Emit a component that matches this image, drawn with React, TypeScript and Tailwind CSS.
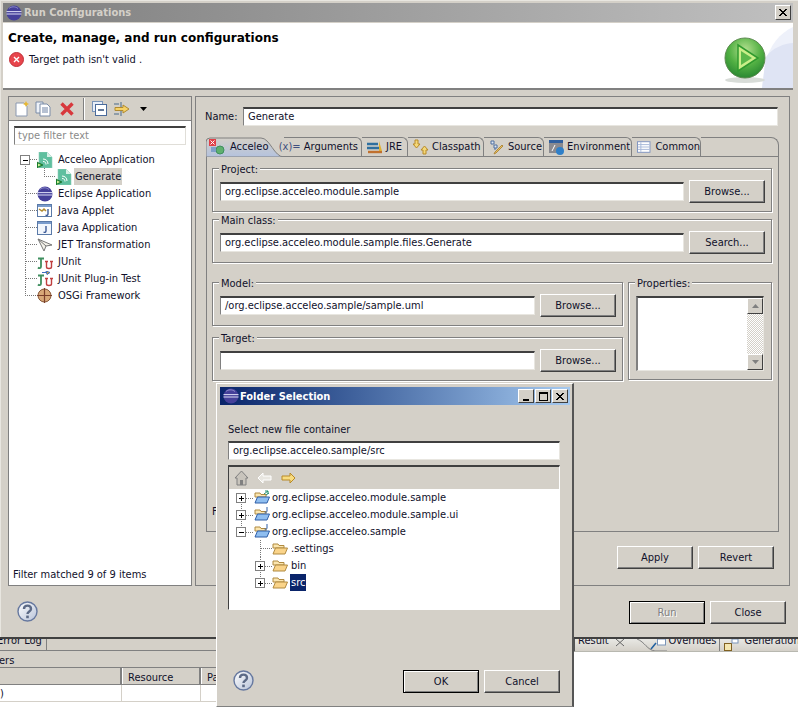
import type { ReactNode } from 'react'

const ui = 'font-["DejaVu_Sans_Condensed","Liberation_Sans",Arial,sans-serif] text-[11px] leading-[14px] text-[#10102a]'

function Btn({ label, def, disabled }: { label: string; def?: boolean; disabled?: boolean }) {
  return (
    <div
      className={`flex h-[23px] w-[76px] shrink-0 items-center justify-center bg-[#d4d0c8] ${
        def
          ? 'border border-black shadow-[inset_1px_1px_0_#fff,inset_-1px_-1px_0_#808080]'
          : 'border-t border-l border-t-white border-l-white border-r border-b border-r-[#404040] border-b-[#404040] shadow-[inset_-1px_-1px_0_#808080]'
      } ${disabled ? 'text-[#808080] [text-shadow:1px_1px_0_#fff]' : ''}`}
    >
      {label}
    </div>
  )
}

function Field({ value, className = '' }: { value?: string; className?: string }) {
  return (
    <div
      className={`flex h-[19px] items-center overflow-hidden whitespace-nowrap bg-white pl-[4px] border-t-2 border-l border-t-[#404040] border-l-[#808080] border-r border-b border-r-[#e8e6e0] border-b-[#e8e6e0] ${className}`}
    >
      {value}
    </div>
  )
}

function Group({ label, className = '', children }: { label: string; className?: string; children?: ReactNode }) {
  return (
    <div className={`relative border border-[#808080] shadow-[1px_1px_0_#fff,inset_1px_1px_0_#fff] ${className}`}>
      <span className="absolute -top-[6px] left-[6px] bg-[#d4d0c8] px-[2px]">{label}</span>
      {children}
    </div>
  )
}

function FieldGroup({ label, value, action, className }: { label: string; value?: string; action: string; className: string }) {
  return (
    <Group label={label} className={`flex h-[44px] items-center gap-[5px] pl-[7px] pr-[6px] pt-[3px] ${className}`}>
      <Field value={value} className="flex-1" />
      <Btn label={action} />
    </Group>
  )
}

function Help() {
  return (
    <svg width="21" height="21" viewBox="0 0 21 21">
      <defs>
        <linearGradient id="hg" x1="0" y1="0" x2="1" y2="1">
          <stop offset="0" stopColor="#fff" />
          <stop offset="1" stopColor="#b7c2d8" />
        </linearGradient>
      </defs>
      <circle cx="10.5" cy="10.5" r="9.5" fill="url(#hg)" stroke="#66789f" strokeWidth="1.4" />
      <path d="M7 8c0-4.5 7-4.5 7 0 0 2.5-3.5 2.5-3.5 5" fill="none" stroke="#5c6a86" strokeWidth="2.4" />
      <rect x="9.2" y="14.6" width="2.6" height="2.6" fill="#5c6a86" />
    </svg>
  )
}

function EclipseBall({ size = 16 }: { size?: number }) {
  return (
    <svg width={size} height={size} viewBox="0 0 16 16" className="shrink-0">
      <circle cx="8" cy="8" r="7.500" fill="#45409a" />
      <path d="M.5 6.600h15M.5 9h15" stroke="#dcdcf4" strokeWidth="1" />
      <path d="M3 3.500c2-2 6-2.400 9 0" fill="none" stroke="#8f8ccc" />
    </svg>
  )
}

function AcceleoIcon() {
  return (
    <svg width="16" height="16" viewBox="0 0 16 16" className="shrink-0">
      <path d="M2 0h8l5 5v11H2z" fill="#5fbf9f" stroke="#8fcfba" strokeWidth=".6" />
      <path d="M10 0v5h5z" fill="#d8efe6" />
      <path d="M6 7c3 0 5 2 5 5M6 9.500c2 0 3 1 3 3" fill="none" stroke="#fff" />
      <path d="M0 10l6 3-6 3z" fill="#1f8f2f" stroke="#0f5f1f" strokeWidth=".6" />
      <path d="M1 11.500l3 1.500-3 1.500z" fill="#d4f0a0" />
    </svg>
  )
}

function AppletIcon() {
  return (
    <svg width="15" height="14" viewBox="0 0 15 14" className="shrink-0">
      <rect x=".5" y=".5" width="14" height="12" fill="#fff" stroke="#5a7aa8" />
      <rect x="1" y="1" width="13" height="2" fill="#7a9ccc" />
      <path d="M2 5l3 2 2-2 2 2" fill="none" stroke="#b08a30" strokeWidth="1.500" />
      <path d="M11 5v5c0 1.500-1.500 1.500-2.500 1" fill="none" stroke="#2f4f8f" strokeWidth="1.300" />
    </svg>
  )
}

function JavaAppIcon() {
  return (
    <svg width="15" height="14" viewBox="0 0 15 14" className="shrink-0">
      <rect x=".5" y=".5" width="14" height="13" fill="#f2f6fc" stroke="#5a7aa8" />
      <rect x="1" y="1" width="13" height="2" fill="#7a9ccc" />
      <path d="M9 5v5c0 1.500-1.500 1.500-2.500 1" fill="none" stroke="#2f4f8f" strokeWidth="1.300" />
    </svg>
  )
}

function JetIcon() {
  return (
    <svg width="16" height="14" viewBox="0 0 16 14" className="shrink-0">
      <path d="M1 1l14 6-6 1-2 5z" fill="#f4f2ea" stroke="#777" />
      <path d="M1 1l8 7" stroke="#777" />
    </svg>
  )
}

function JUnitIcon({ plugin }: { plugin?: boolean }) {
  return (
    <svg width="16" height="16" viewBox="0 0 16 16" className="shrink-0">
      {plugin && <path d="M5 1.500h5M9 0l4 1.500-3 2z" fill="#d8a830" stroke="#3f6fbf" />}
      <path d="M1 4.500h6M4 4.500v8c0 2-2 2-3 1" fill="none" stroke="#3f8f5f" strokeWidth="1.800" />
      <path d="M8 7.500h3M13 7.500h3M9.500 7.500v5.500c0 2 5 2 5 0V7.500" fill="none" stroke="#c04040" strokeWidth="1.400" />
    </svg>
  )
}

function OsgiIcon() {
  return (
    <svg width="15" height="15" viewBox="0 0 15 15" className="shrink-0">
      <circle cx="7.500" cy="7.500" r="6.500" fill="#d8a878" stroke="#8a5a3a" />
      <path d="M7.500 0v15M0 7.500h15" stroke="#7a3f2a" strokeWidth="1.200" />
    </svg>
  )
}

function Folder({ project, mark }: { project?: boolean; mark?: 'j' | 'a' }) {
  return (
    <svg width="16" height="15" viewBox="0 0 16 15" className="shrink-0">
      <path d="M1 3h5l1 1.500h5V7H1z" fill="#fbe6b0" stroke="#b08a40" />
      <path d="M1 13L3.500 7H15.500L13 13z" fill={project ? '#8fbef0' : '#fad48a'} stroke={project ? '#2f5fa8' : '#b08a40'} />
      {mark === 'j' && <path d="M13 0v4c0 1.500-1.500 1.500-2.500 1" fill="none" stroke="#2f5fa8" />}
      {mark === 'a' && <path d="M10 4l4-3M11 1h3v3M12 5l3-2" fill="none" stroke="#1f8f6f" />}
    </svg>
  )
}

function Guide({ w, d, box, cx }: { w: number; d: string; box?: '+' | '-'; cx?: number }) {
  return (
    <svg width={w} height="17" className="shrink-0">
      <path d={d} fill="none" stroke="#777" strokeDasharray="1 1" shapeRendering="crispEdges" />
      {box && cx !== undefined && (
        <>
          <rect x={cx - 4.5} y="4.500" width="9" height="9" fill="#fff" stroke="#808080" shapeRendering="crispEdges" />
          <path d={`M${cx - 2.500} 9h5${box === '+' ? `M${cx} 6.500v5` : ''}`} stroke="#000" shapeRendering="crispEdges" />
        </>
      )}
    </svg>
  )
}

function TreeRow({ guide, icon, label, selected, gap = 'ml-[5px]' }: { guide: ReactNode; icon: ReactNode; label: string; selected?: string; gap?: string }) {
  return (
    <div className="flex h-[17px] items-center whitespace-nowrap">
      {guide}
      {icon}
      <span className={`flex h-[17px] items-center px-[1px] ${gap} ${selected ?? ''}`}>{label}</span>
    </div>
  )
}

function Toolbar() {
  return (
    <div className="flex h-[24px] items-center gap-[4px] border-b border-[#808080] pl-[5px]">
      <svg width="16" height="16" viewBox="0 0 16 16">
        <path d="M2 2h8l3 3v10H2z" fill="#fff" stroke="#8a98b0" />
        <path d="M12 0l1 2 2 1-2 1-1 2-1-2-2-1 2-1z" fill="#e8b830" />
      </svg>
      <svg width="17" height="16" viewBox="0 0 17 16" className="ml-[1px]">
        <path d="M1 1h7v11H1z" fill="#eef2f8" stroke="#7a8ca8" />
        <path d="M5 3h7l3 3v9H5z" fill="#fff" stroke="#7a8ca8" />
        <path d="M7 7h6M7 9h6M7 11h6" stroke="#6f83a6" />
      </svg>
      <svg width="16" height="16" viewBox="0 0 16 16" className="ml-[3px]">
        <path d="M2.500 2.500l11 11M13.500 2.500l-11 11" stroke="#d8383c" strokeWidth="3.400" />
      </svg>
      <div className="ml-[4px] h-[22px] border-l border-l-[#808080] border-r border-r-white" />
      <svg width="16" height="16" viewBox="0 0 16 16" className="ml-[3px]">
        <rect x=".5" y=".5" width="10" height="10" fill="#e8eef8" stroke="#7a94b8" />
        <rect x="3.500" y="3.500" width="11" height="11" fill="#fff" stroke="#4a6a9a" />
        <path d="M6 9h6" stroke="#20406f" strokeWidth="1.400" />
      </svg>
      <svg width="17" height="16" viewBox="0 0 17 16" className="ml-[2px]">
        <path d="M0 3h5M0 13h5" stroke="#4a6a8a" />
        <path d="M7 1v14" stroke="#4a6a8a" />
        <path d="M1 6.500h8V4l6 4-6 4V9.500H1z" fill="#f6d268" stroke="#b08a30" />
      </svg>
      <svg width="7" height="4" viewBox="0 0 7 4" className="ml-[5px]">
        <path d="M0 0h7L3.500 4z" fill="#000" />
      </svg>
    </div>
  )
}

function LeftPanel() {
  return (
    <div className="flex w-[184px] shrink-0 flex-col border border-[#808080]">
      <Toolbar />
      <div className="flex flex-1 flex-col bg-white">
        <div className="mx-[5px] mt-[5px] flex h-[19px] items-center border-t-2 border-l border-t-[#404040] border-l-[#808080] border-r border-b border-r-[#e0ded8] border-b-[#e0ded8] pl-[3px] text-[#8a8a8a]">
          type filter text
        </div>
        <div className="mt-[6px]">
          <TreeRow gap="ml-[4px]" guide={<Guide w={28} d="M21 8.500H28M16.500 13V17" box="-" cx={16} />} icon={<AcceleoIcon />} label="Acceleo Application" />
          <TreeRow gap="ml-[2px]" guide={<Guide w={47} d="M16.500 0V17M35.500 0V8.500H47" />} icon={<AcceleoIcon />} label="Generate" selected="bg-[#d4d0c8]" />
          <TreeRow gap="ml-[4px]" guide={<Guide w={28} d="M16.500 0V17M16.500 8.500H28" />} icon={<EclipseBall />} label="Eclipse Application" />
          <TreeRow guide={<Guide w={28} d="M16.500 0V17M16.500 8.500H28" />} icon={<AppletIcon />} label="Java Applet" />
          <TreeRow guide={<Guide w={28} d="M16.500 0V17M16.500 8.500H28" />} icon={<JavaAppIcon />} label="Java Application" />
          <TreeRow gap="ml-[4px]" guide={<Guide w={28} d="M16.500 0V17M16.500 8.500H28" />} icon={<JetIcon />} label="JET Transformation" />
          <TreeRow gap="ml-[4px]" guide={<Guide w={28} d="M16.500 0V17M16.500 8.500H28" />} icon={<JUnitIcon />} label="JUnit" />
          <TreeRow gap="ml-[4px]" guide={<Guide w={28} d="M16.500 0V17M16.500 8.500H28" />} icon={<JUnitIcon plugin />} label="JUnit Plug-in Test" />
          <TreeRow guide={<Guide w={28} d="M16.500 0V8.500H28" />} icon={<OsgiIcon />} label="OSGi Framework" />
        </div>
        <div className="mt-auto pb-[3px] pl-[4px]">Filter matched 9 of 9 items</div>
      </div>
    </div>
  )
}

function Tab({ w, icon, label }: { w: number; icon: ReactNode; label: string }) {
  return (
    <div
      className="flex h-[19px] shrink-0 items-center gap-[3px] whitespace-nowrap rounded-tr-[6px] border-t border-r border-[#808080] pl-[5px]"
      style={{ width: w }}
    >
      {icon}
      {label}
    </div>
  )
}

function TabStrip() {
  return (
    <div className="flex h-[20px] border-b border-[#808080]">
      <div className="relative flex h-[20px] w-[78px] shrink-0 items-center pl-[24px]">
        <svg width="78" height="20" viewBox="0 0 78 20" className="absolute left-0 top-0">
          <defs>
            <linearGradient id="tabg" x1="0" y1="0" x2="0" y2="1">
              <stop offset="0" stopColor="#d4d0c8" />
              <stop offset="1" stopColor="#b4c2de" />
            </linearGradient>
          </defs>
          <path d="M0 20V5Q0 1 4 1H55C64 1 68 20 78 20z" fill="url(#tabg)" stroke="#808080" />
        </svg>
        <svg width="16" height="16" viewBox="0 0 16 16" className="absolute left-[3px] top-[2px]">
          <rect x="0" y="0" width="7" height="7" fill="#e04048" />
          <path d="M1.500 1.500l4 4M5.500 1.500l-4 4" stroke="#fff" />
          <circle cx="11" cy="11" r="4" fill="#5fb06f" stroke="#3f8f5f" />
          <rect x="2" y="8" width="5" height="5" fill="#7f9fc8" />
        </svg>
        <span className="relative">Acceleo</span>
      </div>
      <div className="flex h-[19px] w-[78px] shrink-0 items-center justify-end whitespace-nowrap rounded-tr-[6px] border-t border-r border-[#808080] pr-[3px]">
        <span className="text-[#3f4f7f]">(x)=&nbsp;</span>Arguments
      </div>
      <Tab
        w={46}
        icon={
          <svg width="16" height="14" viewBox="0 0 16 14">
            <path d="M0 4h11M0 8h12" stroke="#2f6f9f" strokeWidth="2.400" />
            <path d="M1 12h14" stroke="#c0702f" strokeWidth="2.400" />
            <path d="M12 1l3 10h-3z" fill="#e0b030" />
          </svg>
        }
        label="JRE"
      />
      <Tab
        w={76}
        icon={
          <svg width="16" height="16" viewBox="0 0 16 16">
            <path d="M2 1h3v4h2L3.500 9 0 5h2zM10 15h3v-4h2l-3.500-4L8 11h2z" fill="#f4d878" stroke="#b88a28" />
          </svg>
        }
        label="Classpath"
      />
      <Tab
        w={60}
        icon={
          <svg width="16" height="16" viewBox="0 0 16 16">
            <path d="M2 2h3v3H2zM5 6h3v3H5zM5 10h2" fill="#dfe8f4" stroke="#4f6f9f" />
            <path d="M14 7L7 14l-2 1 1-2 7-7z" fill="#e8c060" stroke="#b08a40" />
          </svg>
        }
        label="Source"
      />
      <Tab
        w={88}
        icon={
          <svg width="15" height="15" viewBox="0 0 15 15">
            <rect x="0" y="0" width="14" height="13" fill="#8a8a90" />
            <rect x="0" y="0" width="14" height="3" fill="#2f5f9f" />
            <path d="M3 11l3-6" stroke="#fff" />
            <circle cx="11" cy="11" r="4" fill="#2f7fc8" />
          </svg>
        }
        label="Environment"
      />
      <Tab
        w={69}
        icon={
          <svg width="15" height="14" viewBox="0 0 15 14" className="mr-[1px]">
            <rect x=".5" y="1.500" width="13" height="11" fill="#fff" stroke="#7f94c0" />
            <path d="M1 4.500h12M1 7h12M1 9.500h12M4 2v10" stroke="#a8b8d8" />
          </svg>
        }
        label="Common"
      />
      <div className="flex-1 rounded-tr-[8px] border-t border-r border-[#808080] -mb-[1px]" />
    </div>
  )
}

function ScrollButton({ down }: { down?: boolean }) {
  return (
    <div className="flex h-[16px] items-center justify-center bg-[#d4d0c8] border-t border-l border-t-white border-l-white border-r border-b border-r-[#404040] border-b-[#404040]">
      <svg width="7" height="4" viewBox="0 0 7 4">
        <path d={down ? 'M0 0h7L3.500 4z' : 'M0 4h7L3.500 0z'} fill="#808080" />
      </svg>
    </div>
  )
}

function RightPanel() {
  return (
    <div className="ml-[3px] flex w-[595px] shrink-0 flex-col border border-[#808080] pl-[10px] pt-[10px]">
      <div className="flex h-[19px] items-center gap-[8px]">
        <span className="-ml-[1px] w-[30px]">Name:</span>
        <Field value="Generate" className="w-[535px]" />
      </div>
      <div className="mt-[11px] w-[573px]">
        <TabStrip />
        <div className="h-[375px] border-x border-b border-[#808080] pl-[5px] pr-[5px] pt-[11px]">
          <FieldGroup label="Project:" value="org.eclipse.acceleo.module.sample" action="Browse..." className="w-[560px]" />
          <FieldGroup label="Main class:" value="org.eclipse.acceleo.module.sample.files.Generate" action="Search..." className="mt-[7px] w-[560px]" />
          <div className="mt-[19px] flex gap-[5px]">
            <div className="flex flex-col gap-[11px]">
              <FieldGroup label="Model:" value="/org.eclipse.acceleo.sample/sample.uml" action="Browse..." className="w-[411px]" />
              <FieldGroup label="Target:" action="Browse..." className="w-[411px]" />
            </div>
            <Group label="Properties:" className="h-[98px] w-[144px] px-[7px] pt-[13px]">
              <div className="flex h-[75px] border-t-2 border-l-2 border-t-[#404040] border-l-[#808080] border-r border-b border-r-[#e8e6e0] border-b-[#e8e6e0] bg-white">
                <div className="flex-1" />
                <div className="flex w-[16px] flex-col">
                  <ScrollButton />
                  <div className="flex-1 bg-[repeating-conic-gradient(#fff_0_25%,#d4d0c8_0_50%)] bg-[length:2px_2px]" />
                  <ScrollButton down />
                </div>
              </div>
            </Group>
          </div>
          <div className="mt-[124px]">Form</div>
        </div>
      </div>
      <div className="mt-[14px] flex w-[568px] justify-end gap-[5px]">
        <Btn label="Apply" />
        <Btn label="Revert" />
      </div>
    </div>
  )
}

function Banner() {
  return (
    <svg width="73" height="65" viewBox="0 0 73 65" className="shrink-0">
      <defs>
        <radialGradient id="ball" cx="0.500" cy="0.300" r="0.800">
          <stop offset="0" stopColor="#b4e090" />
          <stop offset="0.500" stopColor="#52b043" />
          <stop offset="1" stopColor="#1c7a2c" />
        </radialGradient>
      </defs>
      <path d="M73 4C60 10 50 22 45 40L42 65H73z" fill="#eef1fa" />
      <path d="M73 20C65 20 52 25 46 34L42 65H73z" fill="#dfe4f4" />
      <ellipse cx="25" cy="57" rx="20" ry="3" fill="#d8dcd8" />
      <circle cx="25" cy="35" r="20" fill="url(#ball)" stroke="#5c8a50" />
      <path d="M18 22v26l20-13z" fill="#c8ee88" stroke="#2f9a2f" strokeWidth="1.500" />
      <path d="M21 28v14l11-7z" fill="#5ab84a" />
    </svg>
  )
}

function MainWindow() {
  return (
    <div className="flex h-[637px] flex-col bg-[#d4d0c8] pt-[3px] shadow-[inset_1px_1px_0_#e8e6e0]">
      <div className="mx-[3px] flex h-[19px] w-[790px] items-center gap-[2px] bg-gradient-to-r from-[#7f7f7f] to-[#c0c0c0] pl-[3px] pr-[2px] text-[#d4d0c8] font-bold">
        <EclipseBall />
        <span className="flex-1">Run Configurations</span>
        <div className="flex h-[15px] w-[16px] items-center justify-center border-t border-l border-t-white border-l-white border-r border-b border-r-[#404040] border-b-[#404040] bg-[#d4d0c8]">
          <svg width="8" height="7" viewBox="0 0 8 7">
            <path d="M0 0l7 7M7 0L0 7M1 0l7 7M8 0L1 7" stroke="#000" />
          </svg>
        </div>
      </div>
      <div className="ml-[3px] mt-px flex h-[67px] w-[790px] border-b-2 border-[#808080] bg-white">
        <div className="flex-1 pl-[5px] pt-[7px]">
          <div className="font-['DejaVu_Sans',sans-serif] text-[12px] font-bold leading-[16px] text-black">Create, manage, and run configurations</div>
          <div className="ml-[1px] mt-[6px] flex items-center gap-[5px]">
            <svg width="15" height="15" viewBox="0 0 15 15">
              <circle cx="7.500" cy="7.500" r="7" fill="#e8454c" stroke="#c03038" />
              <path d="M5 5l5 5M10 5l-5 5" stroke="#fff" strokeWidth="1.400" />
            </svg>
            <span>Target path isn't valid .</span>
          </div>
        </div>
        <Banner />
      </div>
      <div className="mt-[6px] flex h-[490px] pl-[8px]">
        <LeftPanel />
        <RightPanel />
      </div>
      <div className="flex w-[786px] items-start pl-[17px] pt-[15px]">
        <Help />
        <div className="ml-auto flex gap-[5px]">
          <Btn label="Run" def disabled />
          <Btn label="Close" />
        </div>
      </div>
    </div>
  )
}

function BackgroundView() {
  return (
    <div className="flex h-[70px] border-t-2 border-[#404040]">
      <div className="flex w-[573px] shrink-0 flex-col bg-[#d4d0c8]">
        <div className="flex h-[12px] border-b border-[#808080]">
          <div className="w-[47px] overflow-hidden border-r border-[#808080]">
            <div className="-mt-[5px] -ml-[3px] whitespace-nowrap">Error Log</div>
          </div>
        </div>
        <div className="flex h-[17px] items-center overflow-hidden border-b border-[#808080] pt-[3px]">
          <span className="-ml-[1px]">ers</span>
        </div>
        <div className="flex h-[17px] border-b border-[#808080]">
          <div className="w-[122px] border-r-2 border-r-[#808080]" />
          <div className="w-[79px] border-r-2 border-r-[#808080] pl-[5px] pt-[3px] border-l border-l-white">Resource</div>
          <div className="border-l border-l-white pl-[5px] pt-[3px]">Path</div>
        </div>
        <div className="flex flex-1 flex-col bg-white">
          <div className="flex h-[17px] border-b border-[#d4d0c8]">
            <div className="w-[122px] border-r border-r-[#d4d0c8] pt-[2px]">)</div>
            <div className="w-[79px] border-r border-r-[#d4d0c8]" />
          </div>
        </div>
      </div>
      <div className="flex-1 bg-white">
        <div className="flex h-[13px] items-start overflow-hidden whitespace-nowrap border-b border-[#b8b8b0] border-l-2 border-l-[#555] bg-gradient-to-b from-[#e8e8e4] to-[#d4d0c8]">
          <span className="-mt-[5px] ml-[3px]">Result</span>
          <svg width="10" height="8" viewBox="0 0 10 8" className="ml-[6px]">
            <path d="M1 0l8 7M9 0L1 7" stroke="#666" fill="none" />
          </svg>
          <svg width="30" height="13" viewBox="0 0 30 13" className="ml-[12px] shrink-0">
            <path d="M0 0C8 3 10 11 18 12H30" fill="none" stroke="#808080" />
            <path d="M14 10l5-6" stroke="#2060a0" strokeWidth="1.500" />
            <rect x="20.500" y="0" width="8" height="6" fill="#fff" stroke="#7a94b8" />
          </svg>
          <span className="-mt-[5px] ml-[2px]">Overrides</span>
          <span className="ml-[3px] h-[13px] border-l border-[#808080]" />
          <svg width="15" height="12" viewBox="0 0 15 12" className="ml-[4px] shrink-0">
            <rect x=".5" y="4.500" width="7" height="7" fill="#f4e6b0" stroke="#806020" />
            <rect x="8" y="0" width="6" height="4" fill="#fff" stroke="#7a94b8" />
          </svg>
          <span className="-mt-[5px] ml-[5px]">Generation</span>
        </div>
      </div>
    </div>
  )
}

function FolderDialog() {
  return (
    <div className="absolute left-[216px] top-[383px] flex h-[324px] w-[358px] flex-col border-t border-l border-t-white border-l-white border-r-2 border-b border-r-[#555] border-b-[#808080] bg-[#d4d0c8] p-[2px]">
      <div className="ml-px mt-px flex h-[18px] w-[350px] items-center bg-gradient-to-r from-[#0a246a] to-[#a6caf0] pl-[3px] pr-[2px] font-bold text-white">
        <EclipseBall />
        <span className="ml-[1px] flex-1 pt-[1px]">Folder Selection</span>
        <div className="flex gap-[1px] text-black">
          <div className="flex h-[14px] w-[16px] items-end justify-center border-t border-l border-t-white border-l-white border-r border-b border-r-[#404040] border-b-[#404040] bg-[#d4d0c8] pb-[1px]">
            <div className="h-[2px] w-[6px] bg-black" />
          </div>
          <div className="flex h-[14px] w-[16px] items-center justify-center border-t border-l border-t-white border-l-white border-r border-b border-r-[#404040] border-b-[#404040] bg-[#d4d0c8]">
            <div className="h-[9px] w-[9px] border border-t-2 border-black" />
          </div>
          <div className="flex h-[14px] w-[16px] items-center justify-center border-t border-l border-t-white border-l-white border-r border-b border-r-[#404040] border-b-[#404040] bg-[#d4d0c8]">
            <svg width="8" height="7" viewBox="0 0 8 7">
              <path d="M0 0l7 7M7 0L0 7M1 0l7 7M8 0L1 7" stroke="#000" />
            </svg>
          </div>
        </div>
      </div>
      <div className="ml-[9px] mt-[18px]">Select new file container</div>
      <Field value="org.eclipse.acceleo.sample/src" className="ml-[9px] mt-[4px] h-[19px] w-[332px]" />
      <div className="ml-[9px] mt-[5px] flex h-[145px] w-[332px] flex-col border-t-2 border-l border-t-[#404040] border-l-[#404040] border-r border-b border-r-white border-b-white">
        <div className="flex h-[22px] items-center gap-[6px] pl-[5px]">
          <svg width="15" height="16" viewBox="0 0 15 16">
            <path d="M7.500 1L14 8h-2v7H3V8H1z" fill="#c8c4bc" stroke="#808080" />
            <rect x="6" y="10" width="3" height="5" fill="#808080" />
          </svg>
          <svg width="16" height="12" viewBox="0 0 16 12" className="ml-[2px]">
            <path d="M1 6l5-5v3h8v4H6v3z" fill="#e8e6e0" stroke="#fff" />
          </svg>
          <svg width="16" height="12" viewBox="0 0 16 12" className="ml-[1px]">
            <path d="M15 6l-5-5v3H2v4h8v3z" fill="#f8dc80" stroke="#b88a28" />
          </svg>
        </div>
        <div className="flex-1 bg-white">
          <TreeRow gap="ml-[1px]" guide={<Guide w={25} d="M16.500 9H25M12.500 13V17" box="+" cx={12} />} icon={<Folder project mark="a" />} label="org.eclipse.acceleo.module.sample" />
          <TreeRow gap="ml-[1px]" guide={<Guide w={25} d="M16.500 9H25M12.500 0V4M12.500 13V17" box="+" cx={12} />} icon={<Folder project mark="j" />} label="org.eclipse.acceleo.module.sample.ui" />
          <TreeRow gap="ml-[1px]" guide={<Guide w={25} d="M16.500 9H25M12.500 0V4" box="-" cx={12} />} icon={<Folder project mark="j" />} label="org.eclipse.acceleo.sample" />
          <TreeRow gap="ml-[2px]" guide={<Guide w={43} d="M31.500 0V17M31.500 8.500H43" />} icon={<Folder />} label=".settings" />
          <TreeRow gap="ml-[2px]" guide={<Guide w={43} d="M36 9H43M31.500 0V4M31.500 13V17" box="+" cx={31} />} icon={<Folder />} label="bin" />
          <TreeRow gap="ml-[2px]" guide={<Guide w={43} d="M36 9H43M31.500 0V4" box="+" cx={31} />} icon={<Folder />} label="src" selected="bg-[#0a246a] text-white" />
        </div>
      </div>
      <div className="mt-[60px] flex w-[341px] items-start pl-[14px]">
        <Help />
        <div className="ml-auto flex gap-[5px]">
          <Btn label="OK" def />
          <Btn label="Cancel" />
        </div>
      </div>
    </div>
  )
}

export default function App() {
  return (
    <div className={`relative h-[707px] w-[798px] overflow-hidden bg-white ${ui}`}>
      <MainWindow />
      <BackgroundView />
      <FolderDialog />
    </div>
  )
}
